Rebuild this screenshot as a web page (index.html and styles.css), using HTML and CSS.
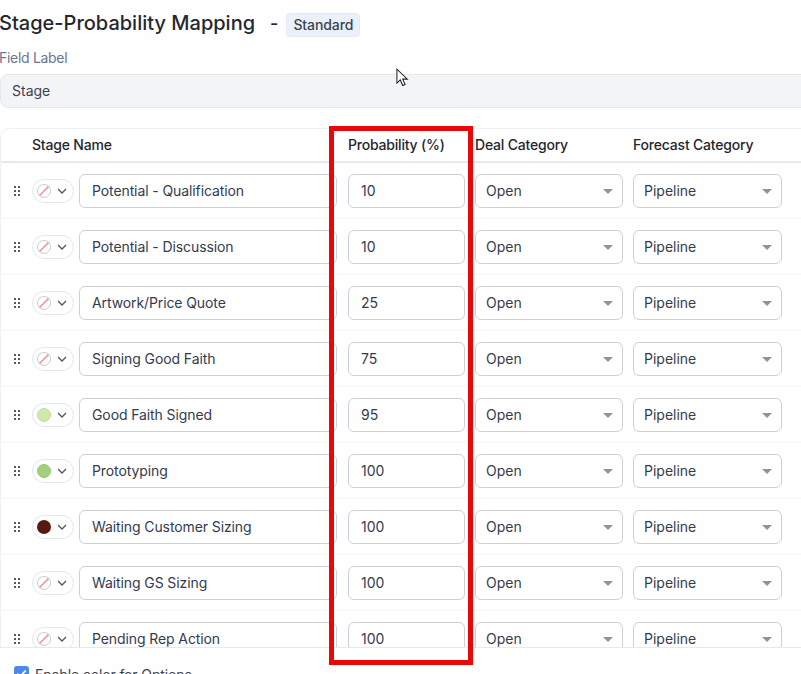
FILE: index.html
```html
<!DOCTYPE html>
<html lang="en">
<head>
<meta charset="utf-8">
<title>Stage-Probability Mapping</title>
<link rel="stylesheet" href="styles.css">
</head>
<body>
<div class="page">
  <div class="title-row">
    <h1 class="title">Stage-Probability Mapping</h1>
    <span class="dash">-</span>
    <span class="badge">Standard</span>
  </div>
  <div class="field-label">Field Label</div>
  <div class="field-value">Stage</div>
  <div class="table">
    <div class="row head">
      <div class="h-name">Stage Name</div>
      <div class="h-cell h-prob">Probability (%)</div>
      <div class="h-cell h-deal">Deal Category</div>
      <div class="h-cell h-fc">Forecast Category</div>
    </div>
    <div class="rows">
      <div class="row item">
        <svg class="grip" viewBox="0 0 7 10"><g fill="#555b66"><rect x="0" y="0" width="2" height="2"/><rect x="4" y="0" width="2" height="2"/><rect x="0" y="4" width="2" height="2"/><rect x="4" y="4" width="2" height="2"/><rect x="0" y="8" width="2" height="2"/><rect x="4" y="8" width="2" height="2"/></g></svg>
        <div class="pill"><svg class="none" viewBox="0 0 16 16"><circle cx="8" cy="8" r="6.5" fill="#fff" stroke="#c9ccd3"/><path d="M3.5 12.5 12.5 3.5" stroke="#ee8f8a" stroke-width="1.4"/></svg><svg class="chev" viewBox="0 0 10 6"><path d="M1 1l4 4 4-4" fill="none" stroke="#555" stroke-width="1.3"/></svg></div>
        <div class="input name">Potential - Qualification</div>
        <div class="input prob">10</div>
        <div class="input sel deal">Open<i class="caret"></i></div>
        <div class="input sel fc">Pipeline<i class="caret"></i></div>
      </div>
      <div class="row item">
        <svg class="grip" viewBox="0 0 7 10"><g fill="#555b66"><rect x="0" y="0" width="2" height="2"/><rect x="4" y="0" width="2" height="2"/><rect x="0" y="4" width="2" height="2"/><rect x="4" y="4" width="2" height="2"/><rect x="0" y="8" width="2" height="2"/><rect x="4" y="8" width="2" height="2"/></g></svg>
        <div class="pill"><svg class="none" viewBox="0 0 16 16"><circle cx="8" cy="8" r="6.5" fill="#fff" stroke="#c9ccd3"/><path d="M3.5 12.5 12.5 3.5" stroke="#ee8f8a" stroke-width="1.4"/></svg><svg class="chev" viewBox="0 0 10 6"><path d="M1 1l4 4 4-4" fill="none" stroke="#555" stroke-width="1.3"/></svg></div>
        <div class="input name">Potential - Discussion</div>
        <div class="input prob">10</div>
        <div class="input sel deal">Open<i class="caret"></i></div>
        <div class="input sel fc">Pipeline<i class="caret"></i></div>
      </div>
      <div class="row item">
        <svg class="grip" viewBox="0 0 7 10"><g fill="#555b66"><rect x="0" y="0" width="2" height="2"/><rect x="4" y="0" width="2" height="2"/><rect x="0" y="4" width="2" height="2"/><rect x="4" y="4" width="2" height="2"/><rect x="0" y="8" width="2" height="2"/><rect x="4" y="8" width="2" height="2"/></g></svg>
        <div class="pill"><svg class="none" viewBox="0 0 16 16"><circle cx="8" cy="8" r="6.5" fill="#fff" stroke="#c9ccd3"/><path d="M3.5 12.5 12.5 3.5" stroke="#ee8f8a" stroke-width="1.4"/></svg><svg class="chev" viewBox="0 0 10 6"><path d="M1 1l4 4 4-4" fill="none" stroke="#555" stroke-width="1.3"/></svg></div>
        <div class="input name">Artwork/Price Quote</div>
        <div class="input prob">25</div>
        <div class="input sel deal">Open<i class="caret"></i></div>
        <div class="input sel fc">Pipeline<i class="caret"></i></div>
      </div>
      <div class="row item">
        <svg class="grip" viewBox="0 0 7 10"><g fill="#555b66"><rect x="0" y="0" width="2" height="2"/><rect x="4" y="0" width="2" height="2"/><rect x="0" y="4" width="2" height="2"/><rect x="4" y="4" width="2" height="2"/><rect x="0" y="8" width="2" height="2"/><rect x="4" y="8" width="2" height="2"/></g></svg>
        <div class="pill"><svg class="none" viewBox="0 0 16 16"><circle cx="8" cy="8" r="6.5" fill="#fff" stroke="#c9ccd3"/><path d="M3.5 12.5 12.5 3.5" stroke="#ee8f8a" stroke-width="1.4"/></svg><svg class="chev" viewBox="0 0 10 6"><path d="M1 1l4 4 4-4" fill="none" stroke="#555" stroke-width="1.3"/></svg></div>
        <div class="input name">Signing Good Faith</div>
        <div class="input prob">75</div>
        <div class="input sel deal">Open<i class="caret"></i></div>
        <div class="input sel fc">Pipeline<i class="caret"></i></div>
      </div>
      <div class="row item">
        <svg class="grip" viewBox="0 0 7 10"><g fill="#555b66"><rect x="0" y="0" width="2" height="2"/><rect x="4" y="0" width="2" height="2"/><rect x="0" y="4" width="2" height="2"/><rect x="4" y="4" width="2" height="2"/><rect x="0" y="8" width="2" height="2"/><rect x="4" y="8" width="2" height="2"/></g></svg>
        <div class="pill"><span class="dot light-green"></span><svg class="chev" viewBox="0 0 10 6"><path d="M1 1l4 4 4-4" fill="none" stroke="#555" stroke-width="1.3"/></svg></div>
        <div class="input name">Good Faith Signed</div>
        <div class="input prob">95</div>
        <div class="input sel deal">Open<i class="caret"></i></div>
        <div class="input sel fc">Pipeline<i class="caret"></i></div>
      </div>
      <div class="row item">
        <svg class="grip" viewBox="0 0 7 10"><g fill="#555b66"><rect x="0" y="0" width="2" height="2"/><rect x="4" y="0" width="2" height="2"/><rect x="0" y="4" width="2" height="2"/><rect x="4" y="4" width="2" height="2"/><rect x="0" y="8" width="2" height="2"/><rect x="4" y="8" width="2" height="2"/></g></svg>
        <div class="pill"><span class="dot green"></span><svg class="chev" viewBox="0 0 10 6"><path d="M1 1l4 4 4-4" fill="none" stroke="#555" stroke-width="1.3"/></svg></div>
        <div class="input name">Prototyping</div>
        <div class="input prob">100</div>
        <div class="input sel deal">Open<i class="caret"></i></div>
        <div class="input sel fc">Pipeline<i class="caret"></i></div>
      </div>
      <div class="row item">
        <svg class="grip" viewBox="0 0 7 10"><g fill="#555b66"><rect x="0" y="0" width="2" height="2"/><rect x="4" y="0" width="2" height="2"/><rect x="0" y="4" width="2" height="2"/><rect x="4" y="4" width="2" height="2"/><rect x="0" y="8" width="2" height="2"/><rect x="4" y="8" width="2" height="2"/></g></svg>
        <div class="pill"><span class="dot maroon"></span><svg class="chev" viewBox="0 0 10 6"><path d="M1 1l4 4 4-4" fill="none" stroke="#555" stroke-width="1.3"/></svg></div>
        <div class="input name">Waiting Customer Sizing</div>
        <div class="input prob">100</div>
        <div class="input sel deal">Open<i class="caret"></i></div>
        <div class="input sel fc">Pipeline<i class="caret"></i></div>
      </div>
      <div class="row item">
        <svg class="grip" viewBox="0 0 7 10"><g fill="#555b66"><rect x="0" y="0" width="2" height="2"/><rect x="4" y="0" width="2" height="2"/><rect x="0" y="4" width="2" height="2"/><rect x="4" y="4" width="2" height="2"/><rect x="0" y="8" width="2" height="2"/><rect x="4" y="8" width="2" height="2"/></g></svg>
        <div class="pill"><svg class="none" viewBox="0 0 16 16"><circle cx="8" cy="8" r="6.5" fill="#fff" stroke="#c9ccd3"/><path d="M3.5 12.5 12.5 3.5" stroke="#ee8f8a" stroke-width="1.4"/></svg><svg class="chev" viewBox="0 0 10 6"><path d="M1 1l4 4 4-4" fill="none" stroke="#555" stroke-width="1.3"/></svg></div>
        <div class="input name">Waiting GS Sizing</div>
        <div class="input prob">100</div>
        <div class="input sel deal">Open<i class="caret"></i></div>
        <div class="input sel fc">Pipeline<i class="caret"></i></div>
      </div>
      <div class="row item">
        <svg class="grip" viewBox="0 0 7 10"><g fill="#555b66"><rect x="0" y="0" width="2" height="2"/><rect x="4" y="0" width="2" height="2"/><rect x="0" y="4" width="2" height="2"/><rect x="4" y="4" width="2" height="2"/><rect x="0" y="8" width="2" height="2"/><rect x="4" y="8" width="2" height="2"/></g></svg>
        <div class="pill"><svg class="none" viewBox="0 0 16 16"><circle cx="8" cy="8" r="6.5" fill="#fff" stroke="#c9ccd3"/><path d="M3.5 12.5 12.5 3.5" stroke="#ee8f8a" stroke-width="1.4"/></svg><svg class="chev" viewBox="0 0 10 6"><path d="M1 1l4 4 4-4" fill="none" stroke="#555" stroke-width="1.3"/></svg></div>
        <div class="input name">Pending Rep Action</div>
        <div class="input prob">100</div>
        <div class="input sel deal">Open<i class="caret"></i></div>
        <div class="input sel fc">Pipeline<i class="caret"></i></div>
      </div>
    </div>
  </div>
  <div class="footer">
    <span class="check"><svg viewBox="0 0 16 16"><path d="M3.5 8.2l3 3 6-6.4" fill="none" stroke="#fff" stroke-width="1.8"/></svg></span>
    <span class="check-label">Enable color for Options</span>
  </div>
  <div class="annotation"></div>
  <svg class="cursor" viewBox="0 0 14 21"><path d="M1 1v15l3.6-3.4 2.6 6 2.6-1.1-2.6-5.8h5L1 1z" fill="#fff" stroke="#222" stroke-width="1.1"/></svg>
</div>
</body>
</html>
```
FILE: styles.css
```css
* { box-sizing: border-box; }
html, body { margin: 0; padding: 0; background: #fff; }
.page {
  position: relative;
  width: 801px;
  height: 674px;
  overflow: hidden;
  font-family: Inter, "Noto Sans", sans-serif;
  color: #2b303b;
  font-size: 14px;
}
.title-row {
  display: flex;
  align-items: center;
  height: 48px;
  padding-bottom: 2px;
}
.title {
  margin: 0 0 0 -1px;
  font-size: 20px;
  line-height: 24px;
  font-weight: 500;
  color: #25272e;
}
.dash { margin-left: 15px; font-size: 18px; font-weight: 500; color: #25272e; }
.badge {
  margin: 4px 0 0 8px;
  height: 24px;
  line-height: 22px;
  padding: 0 6px;
  border: 1px solid #e3ebf7;
  border-radius: 4px;
  background: #ebf1fa;
  font-size: 14px;
  font-weight: 500;
  letter-spacing: -0.1px;
  color: #3c4452;
}
.field-label {
  height: 26px;
  line-height: 20px;
  font-size: 14px;
  margin-left: -1px;
  letter-spacing: -0.3px;
  color: #6b7592;
}
.field-value {
  width: 830px;
  height: 34px;
  line-height: 32px;
  padding-left: 11px;
  background: #f3f4f6;
  border: 1px solid #e6e8ed;
  border-radius: 8px;
  color: #3c4250;
}
.table {
  margin-top: 20px;
  width: 830px;
  height: 519px;
  overflow: hidden;
  border-top: 1px solid #edf0f6;
  border-left: 1px solid #edf0f6;
  border-top-left-radius: 10px;
}
.row { position: relative; display: flex; align-items: center; }
.head {
  height: 34px;
  margin-left: -1px;
  padding-bottom: 2px;
  border-bottom: 2px solid #e4e8f0;
  font-weight: 500;
  font-size: 14px;
  letter-spacing: -0.2px;
  color: #25272e;
}
.h-name { margin-left: 32px; width: 316px; }
.h-prob { width: 127px; }
.h-deal { width: 158px; }
.h-cell { white-space: nowrap; }
.item {
  height: 56px;
  margin-left: -1px;
  padding-left: 14px;
  padding-top: 2px;
  border-bottom: 2px solid #f8f9fb;
}
.rows { height: 485px; overflow: hidden; }
.grip { width: 7px; height: 10px; flex: none; }
.pill {
  display: flex;
  align-items: center;
  width: 42px;
  height: 24px;
  margin-left: 11px;
  padding-left: 3px;
  border: 1px solid #e1e6f0;
  border-radius: 12px;
  flex: none;
}
.none { width: 16px; height: 16px; flex: none; }
.dot { width: 14px; height: 14px; margin: 0 1px 0 1px; border-radius: 50%; flex: none; }
.light-green { background: #cfe8ae; border: 1px solid #bfdc9c; }
.green { background: #a4cf7f; border: 1px solid #95c46f; }
.maroon { background: #581a10; }
.chev { width: 10px; height: 6px; margin-left: 5px; flex: none; }
.input {
  position: relative;
  height: 34px;
  line-height: 32px;
  border: 1px solid #ccd0da;
  border-radius: 6px;
  padding-left: 12px;
  color: #343b4c;
  flex: none;
  background: #fff;
}
.name { width: 258px; margin-left: 5px; letter-spacing: -0.1px; }
.prob { width: 117px; margin-left: 11px; padding-left: 12px; }
.deal { width: 148px; margin-left: 10px; padding-left: 10px; }
.fc { width: 149px; margin-left: 10px; padding-left: 10px; }
.caret {
  position: absolute;
  right: 9px;
  top: 14px;
  width: 0;
  height: 0;
  border-left: 5px solid transparent;
  border-right: 5px solid transparent;
  border-top: 5px solid #8f939c;
}
.footer {
  display: flex;
  align-items: flex-start;
  height: 28px;
  padding: 18px 0 0 14px;
  border-top: 1px solid #e6e9ef;
  background: #fff;
  position: absolute;
  left: 0;
  right: 0;
  top: 647px;
}
.check {
  width: 15px;
  height: 15px;
  border-radius: 3px;
  background: #5088e8;
  flex: none;
  display: flex;
}
.check svg { width: 15px; height: 15px; }
.check-label { margin-left: 6px; line-height: 17px; letter-spacing: -0.12px; color: #3c4250; white-space: nowrap; }
.annotation {
  position: absolute;
  left: 329px;
  top: 126px;
  width: 144px;
  height: 539px;
  border: 5px solid #e90808;
  pointer-events: none;
}
.cursor {
  position: absolute;
  left: 396px;
  top: 68px;
  width: 13px;
  height: 20px;
}
```
